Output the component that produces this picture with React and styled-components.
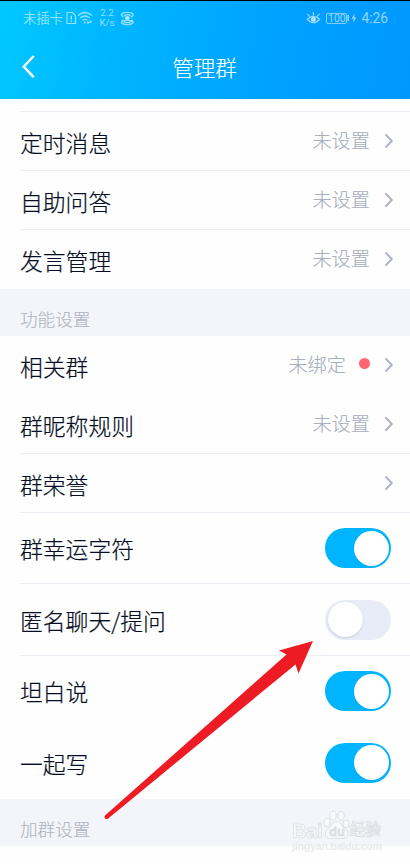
import React, { useState } from "react";
import styled, { createGlobalStyle } from "styled-components";

const GlobalStyle = createGlobalStyle`
  body {
    margin: 0;
    background-color: #fefefe;
  }
  * {
    box-sizing: border-box;
  }
`;

const Container = styled.div`
  position: relative;
  width: 410px;
  height: 864px;
  overflow: hidden;
  background-color: #fefefe;
  color: #050d23;
  font-family: "Noto Sans CJK SC", sans-serif;
  font-weight: 300;
`;

const Header = styled.header`
  height: 99px;
  border-top: 1px solid black;
  background-image: linear-gradient(100deg, #00c8ff 0%, #00b4ff 30%, #00a0ff 70%, #0098ff 100%);
`;

const StatusBar = styled.div`
  height: 34px;
  padding: 0 22px 0 23px;
  display: flex;
  justify-content: space-between;
  align-items: center;
  color: rgba(255, 255, 255, 0.58);
`;

const StatusGroup = styled.div`
  display: flex;
  align-items: center;
`;

const Carrier = styled.span`
  width: 43px;
  font-size: 13.3px;
  line-height: 20px;
  white-space: nowrap;
  -webkit-text-stroke: 0.2px;
`;

const Speed = styled.div`
  width: 16px;
  margin: 0 5px 0 5px;
  font-family: Roboto, sans-serif;
  font-size: 9.6px;
  font-weight: 400;
  line-height: 10.5px;
  text-align: center;
`;

const Battery = styled.div`
  width: 21px;
  height: 11px;
  margin-left: 5px;
  border: 1px solid rgba(255, 255, 255, 0.5);
  border-radius: 2px;
  font-family: Roboto, sans-serif;
  font-size: 10.5px;
  font-weight: 400;
  line-height: 9.5px;
  text-align: center;
`;

const Clock = styled.span`
  margin-left: 4px;
  font-family: Roboto, sans-serif;
  font-size: 13.8px;
  font-weight: 400;
`;

const TitleBar = styled.div`
  height: 64px;
  padding: 0 20px 0 19px;
  display: grid;
  grid-template-columns: 24px 1fr 24px;
  align-items: center;
  color: white;
`;

const BackButton = styled.button`
  display: flex;
  padding: 0;
  border: 0;
  background: none;
  color: inherit;
  cursor: pointer;
`;

const Title = styled.h1`
  margin: 0;
  font-size: 21.5px;
  font-weight: 300;
  line-height: 32px;
  text-align: center;
  -webkit-text-stroke: 0.1px;
`;

const List = styled.div`
  display: flex;
  flex-direction: column;
`;

const TopGap = styled.div`
  height: 13px;
  display: flex;
  align-items: flex-end;
`;

const Divider = styled.div`
  flex: 1;
  height: 1px;
  margin-left: 20px;
  background-color: #ebeef4;
`;

const Row = styled.div`
  height: ${(props) => props.$height || 59}px;
  padding-left: 20px;
`;

const RowInner = styled.div`
  height: 100%;
  padding-right: ${(props) => (props.$toggle ? 19 : 16)}px;
  display: flex;
  justify-content: space-between;
  align-items: center;
  border-bottom: 1px solid ${(props) => (props.$line ? "#ebeef4" : "transparent")};
`;

const Label = styled.span`
  padding-top: ${(props) => (props.$toggle ? 2 : 3)}px;
  font-size: 22.8px;
  line-height: 32px;
  white-space: nowrap;
  -webkit-text-stroke: 0.2px;
`;

const Side = styled.div`
  display: flex;
  align-items: center;
`;

const Value = styled.span`
  margin: -2px 14px 0 0;
  font-size: 19.2px;
  line-height: 28px;
  color: #a9aebf;
  -webkit-text-stroke: 0.15px;
`;

const RedDot = styled.span`
  width: 11px;
  height: 11px;
  margin: -3px 14px 0 -1px;
  border-radius: 100%;
  background-color: #ff6570;
`;

const SectionTitle = styled.div`
  height: 47px;
  padding: 16px 20px 0;
  background-color: #f4f5fa;
  color: #b0b5c4;
  font-size: 17.6px;
  line-height: 28px;
  -webkit-text-stroke: 0.15px;
`;

const Track = styled.button`
  width: 66px;
  height: 40px;
  padding: 2px;
  display: flex;
  justify-content: ${(props) => (props.$on ? "flex-end" : "flex-start")};
  align-items: center;
  border: 0;
  border-radius: 20px;
  background-color: ${(props) => (props.$on ? "#00b5ff" : "#e8ecf6")};
  cursor: pointer;
`;

const Knob = styled.span`
  width: 35px;
  height: 35px;
  margin: 0 0.5px;
  border-radius: 100%;
  background-color: white;
  box-shadow: 0 1px 2px
    ${(props) => (props.$on ? "rgba(0, 90, 160, 0.15)" : "rgba(60, 70, 110, 0.2)")};
`;

const Arrow = styled.svg`
  position: absolute;
  left: 100px;
  top: 636px;
  pointer-events: none;
`;

const Watermark = styled.div`
  position: absolute;
  left: 292px;
  top: 808px;
  width: 92px;
  pointer-events: none;
`;

const BrandLine = styled.div`
  height: 32px;
  display: flex;
  align-items: flex-end;
  color: #f8f9fb;
  font-family: "Liberation Sans", "Noto Sans CJK SC", sans-serif;
  font-weight: 700;
  line-height: 22px;
  -webkit-text-stroke: 0.7px #d8dade;
`;

const BrandName = styled.span`
  margin-bottom: ${(props) => (props.$cjk ? -1 : -2)}px;
  font-size: ${(props) => (props.$cjk ? 15.5 : 20)}px;
  letter-spacing: ${(props) => (props.$cjk ? 0 : -0.1)}px;
  font-weight: ${(props) => (props.$cjk ? 500 : 700)};
`;

const Site = styled.div`
  color: #e9eaee;
  font-family: "Liberation Sans", sans-serif;
  font-size: 10.6px;
  font-weight: 700;
  line-height: 13px;
  letter-spacing: -0.2px;
`;

const messageItems = [
  { name: "定时消息", value: "未设置", line: true },
  { name: "自助问答", value: "未设置", line: true },
  { name: "发言管理", value: "未设置" },
];

const featureItems = [
  { name: "相关群", value: "未绑定", dot: true },
  { name: "群昵称规则", value: "未设置", line: true },
  { name: "群荣誉", line: true },
];

const defaultToggles = [
  { name: "群幸运字符", on: true, line: true, height: 71 },
  { name: "匿名聊天/提问", on: false, line: true, height: 72 },
  { name: "坦白说", on: true, height: 71 },
  { name: "一起写", on: true, height: 72 },
];

function SimIcon() {
  return (
    <svg width="11" height="14" viewBox="0 0 11 14" fill="none" stroke="currentColor">
      <path d="M1 1.5h5.5L9.5 4.5v8H1z" strokeWidth="1.2" />
      <path d="M5.3 4.5v4M5.3 9.5v1.4" strokeWidth="1.4" />
    </svg>
  );
}

function WifiIcon() {
  return (
    <svg width="17" height="14" viewBox="0 0 17 14" fill="none" stroke="currentColor" strokeWidth="1.3">
      <path d="M1 4.5Q8 -1.5 15 4.5M3.2 7Q8 3 12.8 7M5.6 9.3Q8 7.4 10.4 9.3" />
      <circle cx="7.8" cy="11.6" r="1.1" fill="currentColor" stroke="none" />
      <path d="M10 11.2h4.5M13 9.8l1.5 1.4M10 11.2l1.5 1.4" />
    </svg>
  );
}

function HotspotIcon() {
  return (
    <svg width="15" height="15" viewBox="0 0 15 15" fill="none" stroke="currentColor" strokeWidth="1.4">
      <path d="M3.6 6C-.6 4 1.6 1.4 7.3 1.4S15.2 4 11 6M3.6 9c-4.2 2-2 4.6 3.7 4.6S15.2 11 11 9" />
      <path d="M5 5C3.800 4.200 5 3.700 7.300 3.700s3.500.5 2.300 1.300M3.500 10.600Q7.300 7.200 11.100 10.600 7.300 12.500 3.500 10.600" />
      <ellipse cx="7.3" cy="6.9" rx="1.8" ry="1.2" fill="currentColor" />
    </svg>
  );
}

function EyeIcon() {
  return (
    <svg width="15" height="14" viewBox="0 0 15 14" fill="none" stroke="currentColor" strokeWidth="1.3">
      <path d="M1.2 8.2Q7.3 2.6 13.6 8.2 7.3 15.4 1.2 8.2zM7.4 4.5V1M3.7 5.5L1.3 2.9M11.1 5.5l2.4-2.6" />
      <circle cx="7.4" cy="8.3" r="1.9" fill="currentColor" />
    </svg>
  );
}

function ChargeIcon() {
  return (
    <svg width="10" height="12" viewBox="0 0 10 12" fill="currentColor">
      <path d="M0.4 3h1.6v6H0.4zM7.7 1.4L4.5 6.7h2.2L6.1 10.7 9.4 5.4H7.3z" />
    </svg>
  );
}

function BackIcon() {
  return (
    <svg width="18" height="26" viewBox="0 0 18 26" fill="none" stroke="currentColor" strokeWidth="2.4">
      <path d="M14.7 2L4.7 12.7l10 10.5" />
    </svg>
  );
}

function ChevronIcon() {
  return (
    <svg width="10" height="16" viewBox="0 0 10 16" fill="none" stroke="#adb1c0" strokeWidth="2">
      <path d="M1.4 1.4l6.4 6.6-6.4 6.6" />
    </svg>
  );
}

function PawIcon() {
  return (
    <svg width="27" height="30" viewBox="0 0 27 30" fill="#f8f9fb" stroke="#dcdee2" strokeWidth="1">
      <ellipse cx="4.2" cy="12.6" rx="3.2" ry="4.2" />
      <ellipse cx="10" cy="5.6" rx="3.2" ry="4.5" />
      <ellipse cx="18" cy="5.8" rx="3.2" ry="4.4" />
      <ellipse cx="23" cy="13.8" rx="3.1" ry="4" />
      <path d="M13.8 11.5c3.8 0 4.5 4.3 7.7 6.5 6 4.3 3.5 11-2.5 10.5-4-.4-6-.5-10.5 0C1.8 29.2.1 22.3 5.5 18c3.6-2.6 4.5-6.5 8.3-6.5z" />
      <text
        x="6"
        y="26"
        fontSize="13"
        fontWeight="700"
        fontFamily="Liberation Sans, sans-serif"
        fill="#e0e2e6"
        stroke="#d4d6da"
        strokeWidth="0.4"
      >
        du
      </text>
    </svg>
  );
}

function LinkRow({ item }) {
  return (
    <Row>
      <RowInner $line={item.line}>
        <Label>{item.name}</Label>
        <Side>
          {item.value && <Value>{item.value}</Value>}
          {item.dot && <RedDot />}
          <ChevronIcon />
        </Side>
      </RowInner>
    </Row>
  );
}

function App() {
  const [toggles, setToggles] = useState(defaultToggles);

  const handleToggle = (index) => {
    setToggles(toggles.map((t, i) => (i === index ? { ...t, on: !t.on } : t)));
  };

  return (
    <Container>
      <GlobalStyle />
      <Header>
        <StatusBar>
          <StatusGroup>
            <Carrier>未插卡</Carrier>
            <SimIcon />
            <WifiIcon />
            <Speed>
              <div>2.2</div>
              <div>K/s</div>
            </Speed>
            <HotspotIcon />
          </StatusGroup>
          <StatusGroup>
            <EyeIcon />
            <Battery>100</Battery>
            <ChargeIcon />
            <Clock>4:26</Clock>
          </StatusGroup>
        </StatusBar>
        <TitleBar>
          <BackButton aria-label="返回">
            <BackIcon />
          </BackButton>
          <Title>管理群</Title>
        </TitleBar>
      </Header>
      <List>
        <TopGap>
          <Divider />
        </TopGap>
        {messageItems.map((item) => (
          <LinkRow item={item} key={item.name} />
        ))}
        <SectionTitle>功能设置</SectionTitle>
        {featureItems.map((item) => (
          <LinkRow item={item} key={item.name} />
        ))}
        {toggles.map((t, i) => (
          <Row $height={t.height} key={t.name}>
            <RowInner $line={t.line} $toggle>
              <Label $toggle>{t.name}</Label>
              <Track
                $on={t.on}
                role="switch"
                aria-checked={t.on}
                aria-label={t.name}
                onClick={() => handleToggle(i)}
              >
                <Knob $on={t.on} />
              </Track>
            </RowInner>
          </Row>
        ))}
        <SectionTitle>加群设置</SectionTitle>
      </List>
      <Arrow width="220" height="190" viewBox="100 636 220 190">
        <path
          d="M313 641L279 650.5 286.5 654.5 105 815.5Q103.8 817.5 105.4 818.8 107 819.6 108.5 818.2L295.5 664.5 298.5 673.5z"
          fill="#ed1c24"
        />
      </Arrow>
      <Watermark>
        <BrandLine>
          <BrandName>Bai</BrandName>
          <PawIcon />
          <BrandName $cjk>经验</BrandName>
        </BrandLine>
        <Site>jingyan.baidu.com</Site>
      </Watermark>
    </Container>
  );
}

export default App;
